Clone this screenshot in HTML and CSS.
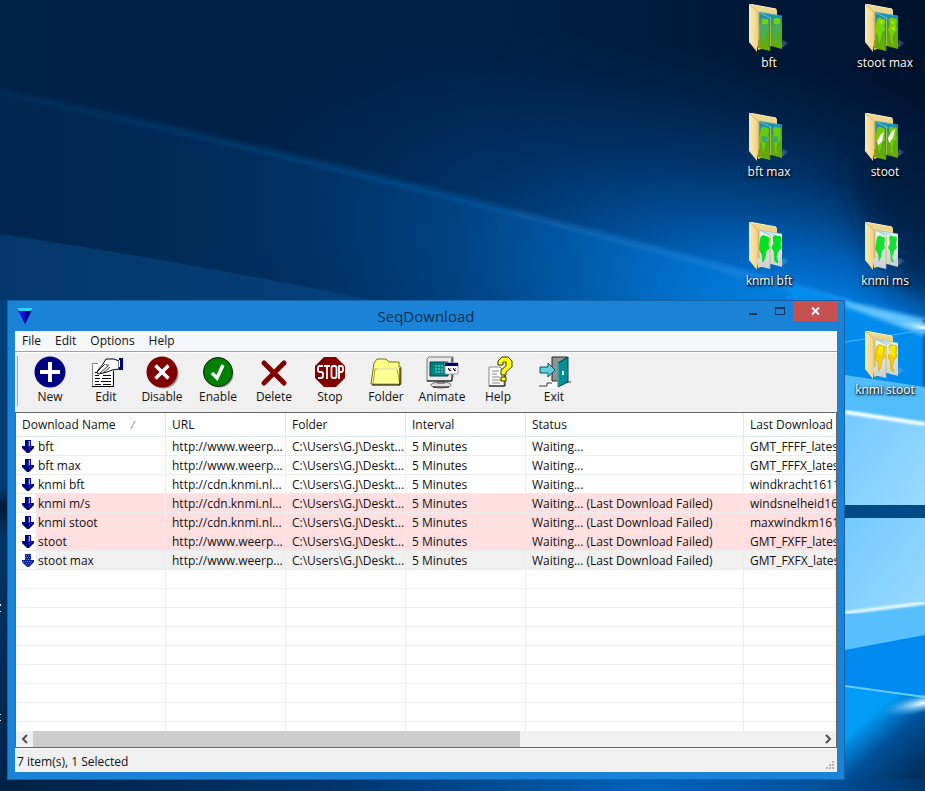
FILE: index.html
```html
<!DOCTYPE html>
<html lang="en">
<head>
<meta charset="utf-8">
<title>SeqDownload</title>
<link rel="stylesheet" href="styles.css">
</head>
<body>
<main class="desktop">
<svg class="wallpaper" viewBox="0 0 925 791" preserveAspectRatio="none" aria-hidden="true">
  <defs>
    <linearGradient id="sky" x1="0" y1="0" x2="1" y2="0"><stop offset="0" stop-color="#00234a"/><stop offset=".5" stop-color="#002148"/><stop offset="1" stop-color="#00132e"/></linearGradient>
    <radialGradient id="glow" gradientUnits="userSpaceOnUse" cx="0" cy="0" r="1" gradientTransform="translate(850 345) rotate(17) scale(640 260)"><stop offset="0" stop-color="#0092fa"/><stop offset=".3" stop-color="#0070d4" stop-opacity=".85"/><stop offset=".6" stop-color="#004c96" stop-opacity=".5"/><stop offset="1" stop-color="#003366" stop-opacity="0"/></radialGradient>
    <linearGradient id="low" x1="0" y1="0" x2="1" y2="0"><stop offset="0" stop-color="#003264" stop-opacity=".2"/><stop offset=".5" stop-color="#0054a0" stop-opacity=".4"/><stop offset="1" stop-color="#0088ec" stop-opacity=".9"/></linearGradient>
    <linearGradient id="beam" x1="0" y1="0" x2="1" y2="0"><stop offset="0" stop-color="#0f4f88" stop-opacity=".2"/><stop offset=".6" stop-color="#0c5ca4" stop-opacity=".55"/><stop offset="1" stop-color="#1a96fc"/></linearGradient>
    <linearGradient id="base" x1="0" y1="0" x2="1" y2="0"><stop offset="0" stop-color="#002145"/><stop offset=".35" stop-color="#00336a"/><stop offset=".7" stop-color="#0062ba"/><stop offset=".88" stop-color="#00529f"/><stop offset="1" stop-color="#00356c"/></linearGradient>
    <linearGradient id="side" x1="0" y1="0" x2="0" y2="1"><stop offset="0" stop-color="#00407a"/><stop offset=".38" stop-color="#003c76"/><stop offset=".42" stop-color="#001a38"/><stop offset=".48" stop-color="#003466"/><stop offset="1" stop-color="#00234a"/></linearGradient>
    <linearGradient id="pane" x1="0" y1="0" x2="1" y2="1"><stop offset="0" stop-color="#72c9fe"/><stop offset="1" stop-color="#9adaff"/></linearGradient>
    <linearGradient id="deep" x1="0" y1="0" x2=".65" y2="1"><stop offset="0" stop-color="#009cf8"/><stop offset=".35" stop-color="#009cf6"/><stop offset=".62" stop-color="#00509a"/><stop offset="1" stop-color="#00305f"/></linearGradient>
    <radialGradient id="flare"><stop offset="0" stop-color="#fff"/><stop offset=".4" stop-color="#9edcff" stop-opacity=".7"/><stop offset="1" stop-color="#3ab4ff" stop-opacity="0"/></radialGradient>
    <filter id="soft" x="-10%" y="-30%" width="120%" height="160%"><feGaussianBlur stdDeviation="2"/></filter>
    <filter id="haze" x="-30%" y="-30%" width="160%" height="160%"><feGaussianBlur stdDeviation="16"/></filter>
    <filter id="edge"><feGaussianBlur stdDeviation="1"/></filter>
  </defs>
  <rect width="925" height="791" fill="url(#sky)"/>
  <rect width="925" height="320" fill="url(#glow)"/>
  <path d="M0 92 Q420 180 845 302 L845 320 L0 320Z" fill="url(#low)"/>
  <path d="M0 234 Q200 264 380 302 L0 320Z" fill="#0b5598" opacity=".4"/>
  <path d="M0 89 Q420 176 850 300 L850 308 Q420 184 0 94Z" fill="url(#beam)" filter="url(#soft)"/>
  <path d="M845 160 L960 130 L960 318 L885 282Z" fill="#001636" opacity=".65" filter="url(#haze)"/>
  <path d="M790 284 L925 330 L925 400 L790 400Z" fill="#008bed" filter="url(#soft)"/>
  <path d="M845 301 L925 319 L925 336 L845 306Z" fill="#62c4ff" filter="url(#soft)"/>
  <ellipse cx="925" cy="328" rx="35" ry="7" transform="rotate(12 925 328)" fill="url(#flare)"/>
  <path d="M845 342 L925 330" stroke="#42b4ff"/>
  <path d="M845 375 L925 387 V430 H845Z" fill="#52bdfb"/>
  <path d="M845 411 L925 424 V506 H845Z" fill="url(#pane)"/>
  <path d="M845 412 L925 424" stroke="#f4ffff" stroke-width="4" filter="url(#edge)"/>
  <rect x="845" y="505" width="80" height="13" fill="#004a88"/>
  <rect x="845" y="518" width="80" height="98" fill="url(#pane)"/>
  <path d="M845 613 L925 603 V650 H845Z" fill="#57bffb"/>
  <path d="M845 613 L925 603" stroke="#f2ffff" stroke-width="3" filter="url(#edge)"/>
  <path d="M845 650 L925 635 V700 H845Z" fill="#008aef"/>
  <path d="M845 686 L925 698 V791 H845Z" fill="url(#deep)"/>
  <path d="M845 686 L925 697" stroke="#63ccff" stroke-width="2"/>
  <ellipse cx="923" cy="703" rx="42" ry="10" transform="rotate(-12 923 703)" fill="url(#flare)"/>
  <rect y="300" width="8" height="491" fill="url(#side)"/>
  <rect y="779" width="925" height="12" fill="url(#base)"/>
  <path d="M0 604h1v2H0zM0 611h1v1H0zM0 714h1v1H0zM0 720h1v1H0z" fill="#fff"/>
</svg>

<svg class="defs" aria-hidden="true">
  <defs>
    <linearGradient id="cover" x1="0" y1="0" x2="1" y2="0"><stop offset="0" stop-color="#faebb4"/><stop offset=".75" stop-color="#efd68c"/><stop offset="1" stop-color="#d9b764"/></linearGradient>
    <linearGradient id="map" x1="0" y1="0" x2="0" y2="1"><stop offset="0" stop-color="#1792c4"/><stop offset=".22" stop-color="#208fa6"/><stop offset=".4" stop-color="#4caa20"/><stop offset="1" stop-color="#6aab00"/></linearGradient>
    <linearGradient id="paper" x1="0" y1="0" x2="0" y2="1"><stop offset="0" stop-color="#e9f7f8"/><stop offset="1" stop-color="#cdcfcf"/></linearGradient>
    <linearGradient id="cast"><stop offset="0" stop-color="#9bb5c8" stop-opacity=".5"/><stop offset="1" stop-color="#9bb5c8" stop-opacity="0"/></linearGradient>
    <symbol id="folder-back" viewBox="0 0 48 50"><path d="M36 44L45 39 38 36Z" fill="url(#cast)"/><path d="M4 0L31 5Q32 5 32 7V40L13 46Z" fill="#eed58c"/><path d="M4 0L31 5" stroke="#fff3c8"/></symbol>
    <symbol id="folder-front" viewBox="0 0 48 50"><path d="M4 0L14 9 14 36 12 37V48L4 38Z" fill="url(#cover)"/><path d="M4 0L14 9V36" fill="none" stroke="#c9a95c" stroke-width=".7"/></symbol>
    <symbol id="sheets-map" viewBox="0 0 48 50"><path d="M14 8L37 12V45L26 42V14Z" fill="url(#map)"/><path d="M13 8L25 14V47L13 44Z" fill="url(#map)"/><path d="M14 8L37 12M15 8L26 14" fill="none" stroke="#49adbd" stroke-width=".7"/><path d="M25 15V47" stroke="#3c7c1c" stroke-width=".8"/><path d="M13 28q3 3 2 7t2 8l-4-1z" fill="#a88e21"/></symbol>
    <symbol id="sheets-paper" viewBox="0 0 48 50"><path d="M14 8L37 12V45L26 42V14Z" fill="url(#paper)"/><path d="M13 8L25 14V47L13 44Z" fill="url(#paper)"/><path d="M14 8L37 12M25 15V47M15 8L26 14" fill="none" stroke="#9eb3b7" stroke-width=".7"/><path d="M16 9l14 4" stroke="#8ce0e8"/></symbol>
    <symbol id="land" viewBox="0 0 48 50"><path d="M16 15q3-3 5 0 3-1 3 3l-1 4 1 4-3 3-1 6-2 5-1-8-3-5 1-6z"/><path d="M28 15q3-3 5 0 3-2 3 2l-1 5 1 4-3 3-2 6 2 6-3-2-1-10-2-3 2-5z"/></symbol>
    <symbol id="down" viewBox="0 0 12 13"><path d="M3 0h6v6h3v2l-5 5H5L0 8V6h3z" fill="#000082"/><path d="M6 1h2v6H6zM8 7h2v1H8zM7 8h1v2H7z" fill="#2438b8"/><path d="M7 1h1v5H7z" fill="#9ccaff"/></symbol>
    <symbol id="down-selected" viewBox="0 0 12 13"><path d="M3 0h6v6h3v2l-5 5H5L0 8V6h3z" fill="#0a1f96"/><path d="M4 1h1v1H4zM6 1h1v1H6zM8 1h1v1H8zM3 3h1v1H3zM5 3h1v1H5zM7 3h1v1H7zM4 5h1v1H4zM6 5h1v1H6zM8 5h1v1H8zM1 7h1v1H1zM3 7h1v1H3zM5 7h1v1H5zM7 7h1v1H7zM9 7h1v1H9zM4 9h1v1H4zM6 9h1v1H6zM8 9h1v1H8zM5 11h1v1H5z" fill="#3f9ce8"/></symbol>
  </defs>
</svg>

<section class="shortcuts" aria-label="Desktop folders">
  <a class="shortcut" href="#bft"><svg viewBox="0 0 48 50"><use href="#folder-back"/><use href="#sheets-map"/><use href="#land" fill="#43ae5d"/><path d="M17 16q3-2 6 0v4h-6zM29 15q3-2 6 0v5h-6z" fill="#6fd40c"/><use href="#folder-front"/></svg><span>bft</span></a>
  <a class="shortcut" href="#stoot-max"><svg viewBox="0 0 48 50"><use href="#folder-back"/><use href="#sheets-map"/><use href="#land" fill="#76d300"/><path d="M18 16l4 1-1 4zM29 17l4 1-1 3zM30 24l4-2-1 5z" fill="#c1e600"/><use href="#folder-front"/></svg><span>stoot max</span></a>
  <a class="shortcut" href="#bft-max"><svg viewBox="0 0 48 50"><use href="#folder-back"/><use href="#sheets-map"/><use href="#land" fill="#64ca14"/><path d="M17 23l6 1-2 6-5-2zM27 23l6 1-1 6-4-2z" fill="#3aa573"/><use href="#folder-front"/></svg><span>bft max</span></a>
  <a class="shortcut" href="#stoot"><svg viewBox="0 0 48 50"><use href="#folder-back"/><use href="#sheets-map"/><use href="#land" fill="#72cc04"/><path d="M20 21l3-2-2 10-4 3-1-4zM31 18l3-2-2 9-4 5-1-5z" fill="#f7fff1"/><use href="#folder-front"/></svg><span>stoot</span></a>
  <a class="shortcut" href="#knmi-bft"><svg viewBox="0 0 48 50"><use href="#folder-back"/><use href="#sheets-paper"/><use href="#land" fill="#00df20" stroke="#00df20"/><use href="#folder-front"/></svg><span>knmi bft</span></a>
  <a class="shortcut" href="#knmi-ms"><svg viewBox="0 0 48 50"><use href="#folder-back"/><use href="#sheets-paper"/><use href="#land" fill="#15df30"/><use href="#folder-front"/></svg><span>knmi ms</span></a>
  <a class="shortcut shortcut-last" href="#knmi-stoot"><svg viewBox="0 0 48 50"><use href="#folder-back"/><use href="#sheets-paper"/><use href="#land" fill="#f2cf00" stroke="#e2b51a"/><path d="M18 15l4 1-1 9-4-2zM29 15l5 0-1 10-5-2z" fill="#ffee00"/><use href="#folder-front"/></svg><span>knmi stoot</span></a>
</section>

<section class="window" aria-label="SeqDownload">
  <header class="titlebar">
    <svg class="app-icon" viewBox="0 0 16 16" aria-hidden="true"><path d="M0 0H16L8 16Z" fill="#0000c8"/><path d="M8 3L14 3 8 16Z" fill="#000078"/><path d="M0 0H16L14 3H2Z" fill="#28d7f0"/><path d="M2 3h6v10z" fill="#1010ef"/></svg>
    <h1>SeqDownload</h1>
    <div class="controls">
      <button class="control" aria-label="Minimize"><svg viewBox="0 0 10 10"><path d="M1 7h8v2H1z" fill="#10365d"/></svg></button>
      <button class="control" aria-label="Maximize"><svg viewBox="0 0 10 10"><path d="M0 1h10v8H0zM1 3v5h8V3z" fill="#10365d" fill-rule="evenodd"/></svg></button>
      <button class="control close" aria-label="Close"><svg viewBox="0 0 10 10"><path d="M1 1.500L8 8.500M8 1.500L1 8.500" stroke="#fff" stroke-width="1.800"/></svg></button>
    </div>
  </header>
  <div class="client">
    <nav class="menu" aria-label="Menu"><button>File</button><button>Edit</button><button>Options</button><button>Help</button></nav>
    <div class="toolbar" role="toolbar" aria-label="Downloads">
      <button class="tool"><svg viewBox="0 0 32 32"><circle cx="16" cy="16" r="15.500" fill="#000080"/><path d="M14 6h4v8h8v4h-8v8h-4v-8H6v-4h8z" fill="#fff"/></svg>New</button>
      <button class="tool"><svg viewBox="0 0 32 32" shape-rendering="crispEdges"><path d="M3 7h19v24H3z" fill="#fff"/><path d="M2 7h1v23H2zM3 7h5v1H3z" fill="#888"/><path d="M2 30h22v1H2zM23 15h1v16h-1z"/><path d="M5 16h6v1H5zM5 19h4v1H5zM13 19h8v1h-8zM5 22h5v1H5zM12 22h9v1h-9zM5 25h4v1H5zM11 25h10v1H11zM5 28h6v1H5zM13 28h8v1h-8z"/><path d="M16 3h8l5 2v8l-7 1-5 2-8 2-2-1 1-3 5-6z" fill="#fff" stroke="#000" shape-rendering="auto"/><path d="M8 15l7-7M10 17l8-7M13 17l7-6M16 9h3" fill="none" stroke="#333" shape-rendering="auto"/><path d="M29 2h4v12h-4z" fill="#000080"/><path d="M29 4h1v7h-1z" fill="#fff"/></svg>Edit</button>
      <button class="tool"><svg viewBox="0 0 32 32"><circle cx="18" cy="18" r="14.500" fill="#999"/><circle cx="16" cy="16" r="15.500" fill="#800000"/><path d="M9.500 9.500L22.500 22.500M22.500 9.500L9.500 22.500" stroke="#fff" stroke-width="3.500"/></svg>Disable</button>
      <button class="tool"><svg viewBox="0 0 32 32"><circle cx="18" cy="18" r="13.500" fill="#999"/><circle cx="16" cy="16" r="14.500" fill="#008000" stroke="#002000"/><path d="M10 17l5 5L21 9" fill="none" stroke="#fff" stroke-width="3.500"/></svg>Enable</button>
      <button class="tool"><svg viewBox="0 0 32 32"><path d="M6 7L26 27M26 7L6 27" stroke="#800000" stroke-width="5" stroke-linecap="round"/></svg>Delete</button>
      <button class="tool"><svg viewBox="0 0 32 32"><path d="M10 1h12l9 9v12l-9 9H10l-9-9V10z" fill="#800000"/><path d="M9 10H5.500Q4 10 4 12v2q0 2 2 2h1q2 0 2 2v2q0 2-2 2H4M10 10h6M13 10v13M18.500 10h2q2 0 2 2v8q0 2-2 2h-1q-2 0-2-2v-8q0-2 2-2M25 23V10h2q2 0 2 2v2q0 2-2 2h-2" fill="none" stroke="#fff" stroke-width="1.800"/></svg>Stop</button>
      <button class="tool"><svg viewBox="0 0 32 32"><path d="M1 28L4 7 7 3h9l3 3h10v5h2v17H4z" fill="#ffff83" stroke="#777700"/><path d="M5 13h22l3 15H3z" fill="#ffff94" stroke="#a5a522"/><path d="M2 29h28V12" fill="none" stroke="#000"/><path d="M7 13h20" stroke="#fff"/></svg>Folder</button>
      <button class="tool"><svg viewBox="0 0 32 32"><ellipse cx="15" cy="29" rx="10" ry="3" fill="#e2e2e2" stroke="#777"/><path d="M7 31h16" stroke="#000"/><path d="M11 23h8v5h-8z" fill="#888"/><path d="M1 3L3 1h24v20l-2 4H1z" fill="#e9e9e9" stroke="#777"/><path d="M1 25h25V2" fill="none" stroke="#000"/><path d="M4 6h18v14H4z" fill="#008080" stroke="#003f40"/><path d="M9 10h8M9 13h8M9 16h8" stroke="#7de8e8" stroke-dasharray="2 1"/><path d="M19 7h13v11H19z" fill="#fff" stroke="#999"/><path d="M19 7h13v3H19z" fill="#000080"/><path d="M22 12h1v1h1v1h1v1h-2v-1h-1zM27 12h1v1h1v1h1v1h-2v-1h-1z" fill="#800000"/><path d="M24 12h1v1h-1zM29 12h1v1h-1z" fill="#008080"/></svg>Animate</button>
      <button class="tool"><svg viewBox="0 0 32 32"><path d="M7 11h11l4 4v15H7z" fill="#fff" stroke="#888"/><path d="M7 30h16V19" fill="none" stroke="#000"/><path d="M10 15h7M10 18h5M10 21h8M10 24h9M10 27h8" stroke="#888"/><path d="M16 8V5l4-4h6l4 4v6l-6 5v3h-5v-5l5-4V6h-3v3h-5z" fill="#ffff00" stroke="#333300"/><path d="M19 21h5v4h-5z" fill="#ffff00" stroke="#333300"/></svg>Help</button>
      <button class="tool"><svg viewBox="0 0 32 32"><path d="M0 30l11-6h21v2l-8 6z" fill="#fff"/><path d="M1 30h8v-3h5M28 26h5" fill="none" stroke="#333"/><path d="M14 1h15v24H14z" fill="#929292" stroke="#222"/><path d="M20 7L30 1v25l-10 5z" fill="#008f92" stroke="#003c40"/><path d="M20 7v24" stroke="#58dede"/><path d="M24 15h2v4h-2z" fill="#d8ffff"/><path d="M2 11h8V7l7 7-7 7v-4H2z" fill="#5fd0dc" stroke="#00555f"/></svg>Exit</button>
    </div>
    <div class="list">
      <div class="viewport">
        <table>
          <colgroup><col class="c-name"><col class="c-mid"><col class="c-mid"><col class="c-mid"><col class="c-status"><col class="c-last"></colgroup>
          <thead><tr><th>Download Name<svg class="sort" viewBox="0 0 6 8" aria-hidden="true"><path d="M1 8L5 0" stroke="#888"/></svg></th><th>URL</th><th>Folder</th><th>Interval</th><th>Status</th><th>Last Download F</th></tr></thead>
          <tbody>
            <tr><td><svg class="arrow"><use href="#down"/></svg>bft</td><td>http://www.weerp...</td><td>C:\Users\G.J\Deskt...</td><td>5 Minutes</td><td>Waiting...</td><td>GMT_FFFF_latest</td></tr>
            <tr><td><svg class="arrow"><use href="#down"/></svg>bft max</td><td>http://www.weerp...</td><td>C:\Users\G.J\Deskt...</td><td>5 Minutes</td><td>Waiting...</td><td>GMT_FFFX_latest</td></tr>
            <tr><td><svg class="arrow"><use href="#down"/></svg>knmi bft</td><td>http://cdn.knmi.nl...</td><td>C:\Users\G.J\Deskt...</td><td>5 Minutes</td><td>Waiting...</td><td>windkracht16112</td></tr>
            <tr class="failed"><td><svg class="arrow"><use href="#down"/></svg>knmi m/s</td><td>http://cdn.knmi.nl...</td><td>C:\Users\G.J\Deskt...</td><td>5 Minutes</td><td>Waiting... (Last Download Failed)</td><td>windsnelheid161</td></tr>
            <tr class="failed"><td><svg class="arrow"><use href="#down"/></svg>knmi stoot</td><td>http://cdn.knmi.nl...</td><td>C:\Users\G.J\Deskt...</td><td>5 Minutes</td><td>Waiting... (Last Download Failed)</td><td>maxwindkm1611</td></tr>
            <tr class="failed"><td><svg class="arrow"><use href="#down"/></svg>stoot</td><td>http://www.weerp...</td><td>C:\Users\G.J\Deskt...</td><td>5 Minutes</td><td>Waiting... (Last Download Failed)</td><td>GMT_FXFF_latest</td></tr>
            <tr class="selected"><td><svg class="arrow"><use href="#down-selected"/></svg>stoot max</td><td>http://www.weerp...</td><td>C:\Users\G.J\Deskt...</td><td>5 Minutes</td><td>Waiting... (Last Download Failed)</td><td>GMT_FXFX_latest</td></tr>
            <tr><td></td><td></td><td></td><td></td><td></td><td></td></tr>
            <tr><td></td><td></td><td></td><td></td><td></td><td></td></tr>
            <tr><td></td><td></td><td></td><td></td><td></td><td></td></tr>
            <tr><td></td><td></td><td></td><td></td><td></td><td></td></tr>
            <tr><td></td><td></td><td></td><td></td><td></td><td></td></tr>
            <tr><td></td><td></td><td></td><td></td><td></td><td></td></tr>
            <tr><td></td><td></td><td></td><td></td><td></td><td></td></tr>
            <tr><td></td><td></td><td></td><td></td><td></td><td></td></tr>
            <tr><td></td><td></td><td></td><td></td><td></td><td></td></tr>
          </tbody>
        </table>
      </div>
      <div class="scrollbar">
        <button aria-label="Scroll left"><svg viewBox="0 0 6 8"><path d="M5 0L1 4l4 4" fill="none" stroke="#505050" stroke-width="2"/></svg></button>
        <div class="track"><div class="thumb"></div></div>
        <button aria-label="Scroll right"><svg viewBox="0 0 6 8"><path d="M1 0l4 4-4 4" fill="none" stroke="#505050" stroke-width="2"/></svg></button>
      </div>
    </div>
    <footer class="status"><span>7 item(s), 1 Selected</span><svg class="grip" viewBox="0 0 9 9" aria-hidden="true"><path d="M6 0h2v2H6zM3 3h2v2H3zM6 3h2v2H6zM0 6h2v2H0zM3 6h2v2H3zM6 6h2v2H6z" fill="#b4b4b4"/></svg></footer>
  </div>
</section>
</main>
</body>
</html>
```
FILE: styles.css
```css
* { box-sizing: border-box; }

body {
  margin: 0;
  font: 12px/18px "Open Sans", "Noto Sans", sans-serif;
  color: #111;
}

button {
  margin: 0;
  padding: 0;
  border: 0;
  background: none;
  font: inherit;
  color: inherit;
}

svg { display: block; }
.defs { position: absolute; width: 0; height: 0; }

.desktop {
  position: relative;
  min-height: 100vh;
  overflow: hidden;
  background: #00234a;
}

.wallpaper {
  position: absolute;
  inset: 0;
  width: 100%;
  height: 100%;
}

.shortcuts {
  position: relative;
  display: grid;
  grid-template-columns: 80px 80px;
  grid-auto-rows: 109px;
  column-gap: 36px;
  justify-content: end;
  padding-top: 4px;
}

.shortcut {
  display: flex;
  flex-direction: column;
  align-items: center;
  color: #fff;
  text-decoration: none;
  text-shadow: 1px 1px 2px #000, 0 1px 3px #000;
  white-space: nowrap;
}

.shortcut svg { width: 48px; height: 50px; }
.shortcut-last { grid-column: 2; }

.window {
  position: absolute;
  inset: 300px 80px 11px 7px;
  display: flex;
  flex-direction: column;
  padding: 0 7px 7px;
  border: 1px solid #1265aa;
  background: #1a83d8;
}

.titlebar {
  display: grid;
  grid-template-columns: 1fr auto 1fr;
  align-items: center;
  height: 30px;
}

.app-icon { width: 16px; height: 16px; margin-left: 2px; }

h1 {
  margin: 0;
  font-size: 15px;
  font-weight: 400;
  line-height: 20px;
  color: #12304f;
}

.controls {
  display: flex;
  align-self: start;
  justify-content: flex-end;
  margin-right: -1px;
}

.control {
  display: grid;
  place-items: center;
  width: 27px;
  height: 20px;
}

.control svg { width: 10px; height: 10px; }
.close { width: 45px; background: #c75050; }

.client {
  display: flex;
  flex: 1;
  flex-direction: column;
  min-height: 0;
  background: #f0f0f0;
}

.menu {
  display: flex;
  gap: 14px;
  height: 21px;
  padding: 0 7px;
  border-bottom: 1px solid #a0a0a0;
  background: #f5f7fa;
}

.toolbar {
  display: flex;
  height: 60px;
  padding: 3px 0 0 7px;
  border-top: 1px solid #fff;
  background: linear-gradient(#a0a0a0, #a0a0a0) 2px 3px / 1px 50px no-repeat;
}

.tool {
  display: flex;
  flex-direction: column;
  align-items: center;
  width: 56px;
}

.tool svg { width: 32px; height: 32px; overflow: visible; }

.list {
  display: flex;
  flex: 1;
  flex-direction: column;
  min-height: 0;
  border: 1px solid #646464;
  background: #fff;
}

.viewport { flex: 1; min-height: 0; overflow: hidden; }

table {
  width: 928px;
  table-layout: fixed;
  border-collapse: separate;
  border-spacing: 0;
}

.c-name { width: 150px; }
.c-mid { width: 120px; }
.c-status { width: 218px; }
.c-last { width: 200px; }

th, td {
  padding: 0 0 0 6px;
  border-right: 1px solid #ececec;
  border-bottom: 1px solid #ececec;
  font-weight: 400;
  text-align: left;
  white-space: nowrap;
  overflow: hidden;
}

th { height: 24px; border-color: #dfe8ef; }

td {
  height: 19px;
  padding-top: 2px;
  line-height: 16px;
}

.failed td { background: #ffdfdf; }
.failed td:first-child { background: linear-gradient(90deg, #fff 20px, #ffdfdf 20px); }
.selected td { background: #f0f0f0; }
.selected td:first-child { background: linear-gradient(90deg, #fff 20px, #f0f0f0 20px); }

.sort { display: inline-block; width: 6px; height: 8px; margin-left: 14px; }

.arrow {
  display: inline-block;
  width: 12px;
  height: 13px;
  margin-right: 4px;
  vertical-align: -2px;
}

.scrollbar { display: flex; height: 16px; background: #f0f0f0; }
.scrollbar button { display: grid; place-items: center; width: 17px; }
.scrollbar svg { width: 6px; height: 8px; overflow: visible; }
.track { flex: 1; }
.thumb { width: 62%; height: 100%; background: #cdcdcd; }

.status {
  display: flex;
  align-items: center;
  justify-content: space-between;
  height: 24px;
  padding: 2px 2px 0;
  border-top: 1px solid #fafafa;
}

.grip { align-self: flex-end; width: 9px; height: 9px; margin-bottom: 2px; }
```
